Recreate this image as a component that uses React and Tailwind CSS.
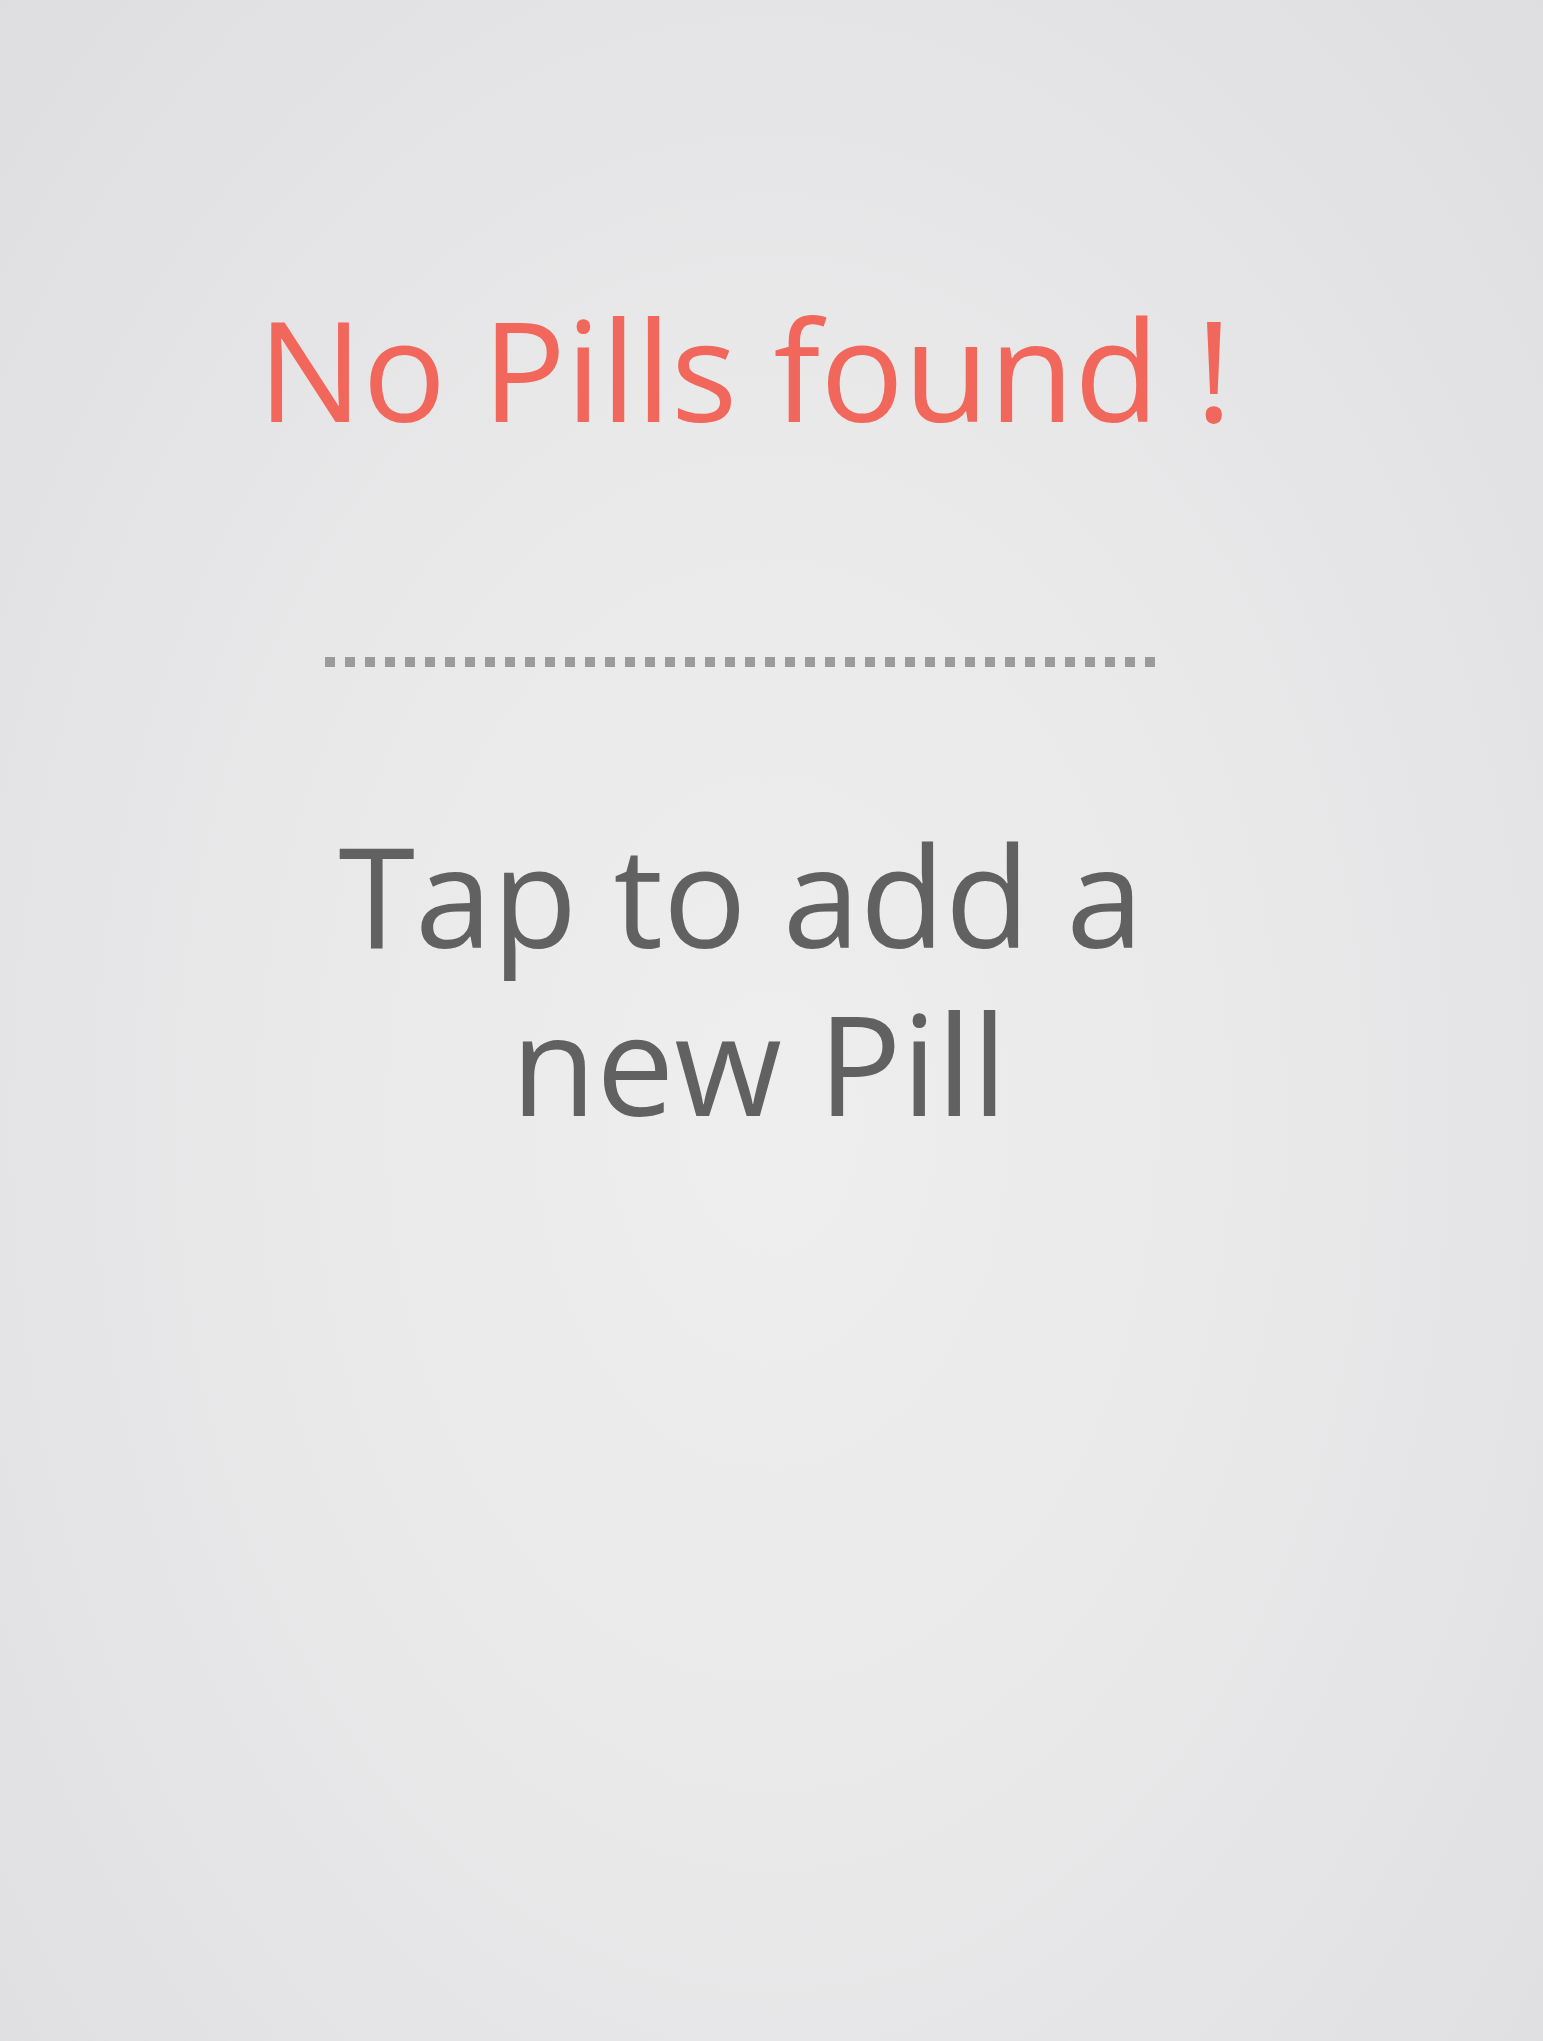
import React from "react";

const dots = Array.from({ length: 42 });

const EmptyPills = () => {
  return (
    <div
      className="min-h-[2041px] w-full flex flex-col items-center pt-[285px] bg-[radial-gradient(ellipse_at_50%_55%,#eeeeee_0%,#e9e9ea_45%,#dedee1_100%)]"
      style={{ fontFamily: '"Open Sans", "Noto Sans", sans-serif' }}
    >
      {/* Titre */}
      <h1 className="mr-[53px] text-[139px] leading-[1.2] font-normal text-[#f2675b]">
        No Pills found !
      </h1>

      {/* Séparateur pointillé */}
      <div className="mt-[205px] mr-[63px] flex gap-[10px]">
        {dots.map((_, i) => (
          <span key={i} className="block h-[10px] w-[10px] bg-[#9b9b9b]" />
        ))}
      </div>

      {/* Action */}
      <p className="mt-[143px] mr-[25px] text-center text-[139px] leading-[168px] font-normal text-[#616161] cursor-pointer">
        Tap to add a{"\u00a0"}
        <br />
        new Pill
      </p>
    </div>
  );
};

export default function App() {
  return <EmptyPills />;
}
